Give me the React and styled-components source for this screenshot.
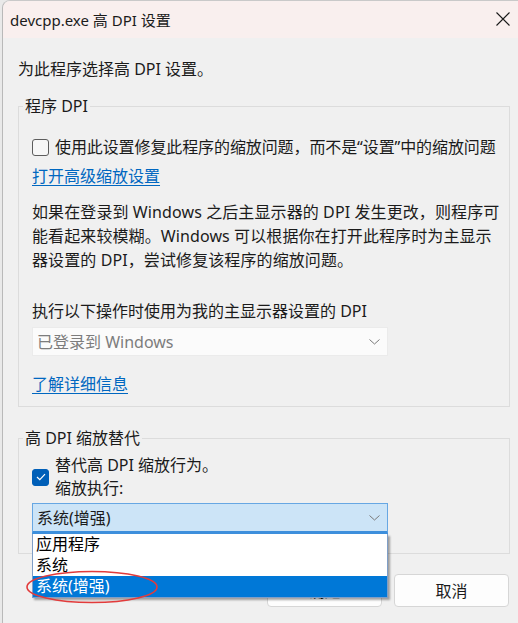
import React from "react";
import styled, { createGlobalStyle } from "styled-components";

const GlobalStyle = createGlobalStyle`
    html, body {
        margin: 0;
        padding: 0;
        background: #e9e9e9;
    }
    body {
        font-family: "Noto Sans", "Noto Sans CJK SC", sans-serif;
        color: #1b1b1b;
    }
`;

const Window = styled.div`
    margin-left: 2px;
    width: 516px;
    height: 623px;
    border-left: 1px solid #b9b9b9;
    border-top: 1px solid #c9c9c9;
    border-top-left-radius: 8px;
    overflow: hidden;
    background: #f0f0f0;
    box-sizing: border-box;
    display: flex;
    flex-direction: column;
`;

const TitleBar = styled.div`
    height: 37px;
    flex: none;
    display: flex;
    align-items: center;
    justify-content: space-between;
    padding: 0 6px 0 7px;
    background: #f9efee;
    font-size: 15px;
`;

const CloseButton = styled.div`
    width: 16px;
    height: 16px;
    display: flex;
    margin-right: 1px;
    margin-top: -2px;
`;

const Body = styled.div`
    padding: 19px 8px 0 15px;
    font-size: 16px;
    line-height: 24px;
    white-space: nowrap;
`;

const Intro = styled.div`
    margin: 0;
`;

const Group = styled.fieldset`
    margin: ${p => p.$top}px 0 0;
    padding: ${p => p.$pt}px 13px ${p => p.$pb}px 13px;
    border: 1px solid #dcdcdc;
    min-width: 0;
`;

const Legend = styled.legend`
    padding: 0 2px;
    margin-left: -9px;
    line-height: 24px;
`;

const CheckRow = styled.div`
    display: flex;
    align-items: center;
    gap: 6px;
    line-height: ${p => p.$lh || 24}px;
`;

const Tight = styled.span`
    letter-spacing: -0.1px;
`;

const Box = styled.div`
    width: 15px;
    height: 15px;
    flex: none;
    border-radius: 3px;
    border: 1px solid ${p => (p.$checked ? "#005fb8" : "#5d5d5d")};
    background: ${p => (p.$checked ? "#005fb8" : "#f7f7f7")};
    display: flex;
    align-items: center;
    justify-content: center;
`;

const Link = styled.a`
    display: inline-block;
    color: #0067c0;
    text-decoration: underline;
    text-underline-offset: 3px;
    margin-top: ${p => p.$top}px;
`;

const Paragraph = styled.p`
    margin: 12px 0 0;
    line-height: 24px;
    letter-spacing: 0.1px;
`;

const Label = styled.div`
    margin-top: 27px;
`;

const Combo = styled.div`
    position: relative;
    width: 356px;
    margin-top: ${p => p.$top}px;
`;

const ComboField = styled.div`
    height: ${p => (p.$open ? 31 : 29)}px;
    box-sizing: border-box;
    display: flex;
    align-items: center;
    justify-content: space-between;
    padding: 0 7px 0 4px;
    background: ${p => (p.$open ? "#cce4f7" : "#fbfbfb")};
    border: 1px solid ${p => (p.$open ? "#67a7e3" : "#ebebeb")};
    border-bottom: ${p => (p.$open ? "3px solid #3d8fdc" : "1px solid #ebebeb")};
    color: ${p => (p.$open ? "#1b1b1b" : "#7d7d7d")};
    font-size: 16px;
`;

const Chevron = () => (
    <svg width="11" height="6" viewBox="0 0 11 6">
        <path d="M0.5 0.5 L5.5 5 L10.5 0.5" fill="none" stroke="#7a7a7a" strokeWidth="1" />
    </svg>
);

const List = styled.div`
    position: absolute;
    left: 0;
    top: 31px;
    width: 356px;
    box-sizing: border-box;
    background: #fff;
    border: 1px solid #7f9ec7;
    border-top: none;
    box-shadow: 2px 2px 2px rgba(0, 0, 0, 0.35);
    z-index: 5;
`;

const ListItem = styled.div`
    height: 21px;
    line-height: 21px;
    padding-left: 3px;
    font-size: 16px;
    background: ${p => (p.$selected ? "#0078d7" : "transparent")};
    color: ${p => (p.$selected ? "#fff" : "#000")};
`;

const Ring = styled.svg`
    position: absolute;
    left: -7px;
    top: 67px;
    z-index: 6;
    pointer-events: none;
`;

const Buttons = styled.div`
    display: flex;
    justify-content: flex-end;
    gap: 12px;
    margin-top: 20px;
    margin-right: 1px;
`;

const Button = styled.div`
    width: 115px;
    height: 33px;
    box-sizing: border-box;
    display: flex;
    align-items: center;
    justify-content: center;
    background: #fdfdfd;
    border: 1px solid #d6d6d6;
    border-radius: 4px;
    font-size: 16px;
`;

export default function App() {
    return (
        <>
            <GlobalStyle />
            <Window>
                <TitleBar>
                    <span>devcpp.exe 高 DPI 设置</span>
                    <CloseButton>
                        <svg width="16" height="16" viewBox="0 0 16 16">
                            <path d="M1.5 1.5 L14.5 14.5 M14.5 1.5 L1.5 14.5" stroke="#1b1b1b" strokeWidth="1.1" />
                        </svg>
                    </CloseButton>
                </TitleBar>
                <Body>
                    <Intro>为此程序选择高 DPI 设置。</Intro>

                    <Group $top={13} $pt={17} $pb={10}>
                        <Legend>程序 DPI</Legend>
                        <CheckRow>
                            <Box />
                            <Tight>使用此设置修复此程序的缩放问题，而不是“设置”中的缩放问题</Tight>
                        </CheckRow>
                        <Link $top={5}>打开高级缩放设置</Link>
                        <Paragraph>
                            如果在登录到 Windows 之后主显示器的 DPI 发生更改，则程序可
                            <br />
                            能看起来较模糊。Windows 可以根据你在打开此程序时为主显示
                            <br />
                            器设置的 DPI，尝试修复该程序的缩放问题。
                        </Paragraph>
                        <Label>执行以下操作时使用为我的主显示器设置的 DPI</Label>
                        <Combo $top={4}>
                            <ComboField>
                                <span>已登录到 Windows</span>
                                <Chevron />
                            </ComboField>
                        </Combo>
                        <Link $top={16}>了解详细信息</Link>
                    </Group>

                    <Group $top={19} $pt={4} $pb={19}>
                        <Legend>高 DPI 缩放替代</Legend>
                        <CheckRow $lh={23}>
                            <Box $checked>
                                <svg width="10" height="8" viewBox="0 0 10 8">
                                    <path d="M1 4 L3.8 6.6 L9 1.2" fill="none" stroke="#fff" strokeWidth="1.2" />
                                </svg>
                            </Box>
                            <div>
                                替代高 DPI 缩放行为。
                                <br />
                                缩放执行:
                            </div>
                        </CheckRow>
                        <Combo $top={3}>
                            <ComboField $open>
                                <span>系统(增强)</span>
                                <Chevron />
                            </ComboField>
                            <List>
                                <ListItem>应用程序</ListItem>
                                <ListItem>系统</ListItem>
                                <ListItem $selected>系统(增强)</ListItem>
                            </List>
                            <Ring width="134" height="34" viewBox="0 0 134 34">
                                <ellipse cx="67" cy="17" rx="65" ry="15.5" fill="none" stroke="#e23b3b" strokeWidth="1.6" />
                            </Ring>
                        </Combo>
                    </Group>

                    <Buttons>
                        <Button>确定</Button>
                        <Button>取消</Button>
                    </Buttons>
                </Body>
            </Window>
        </>
    );
}
